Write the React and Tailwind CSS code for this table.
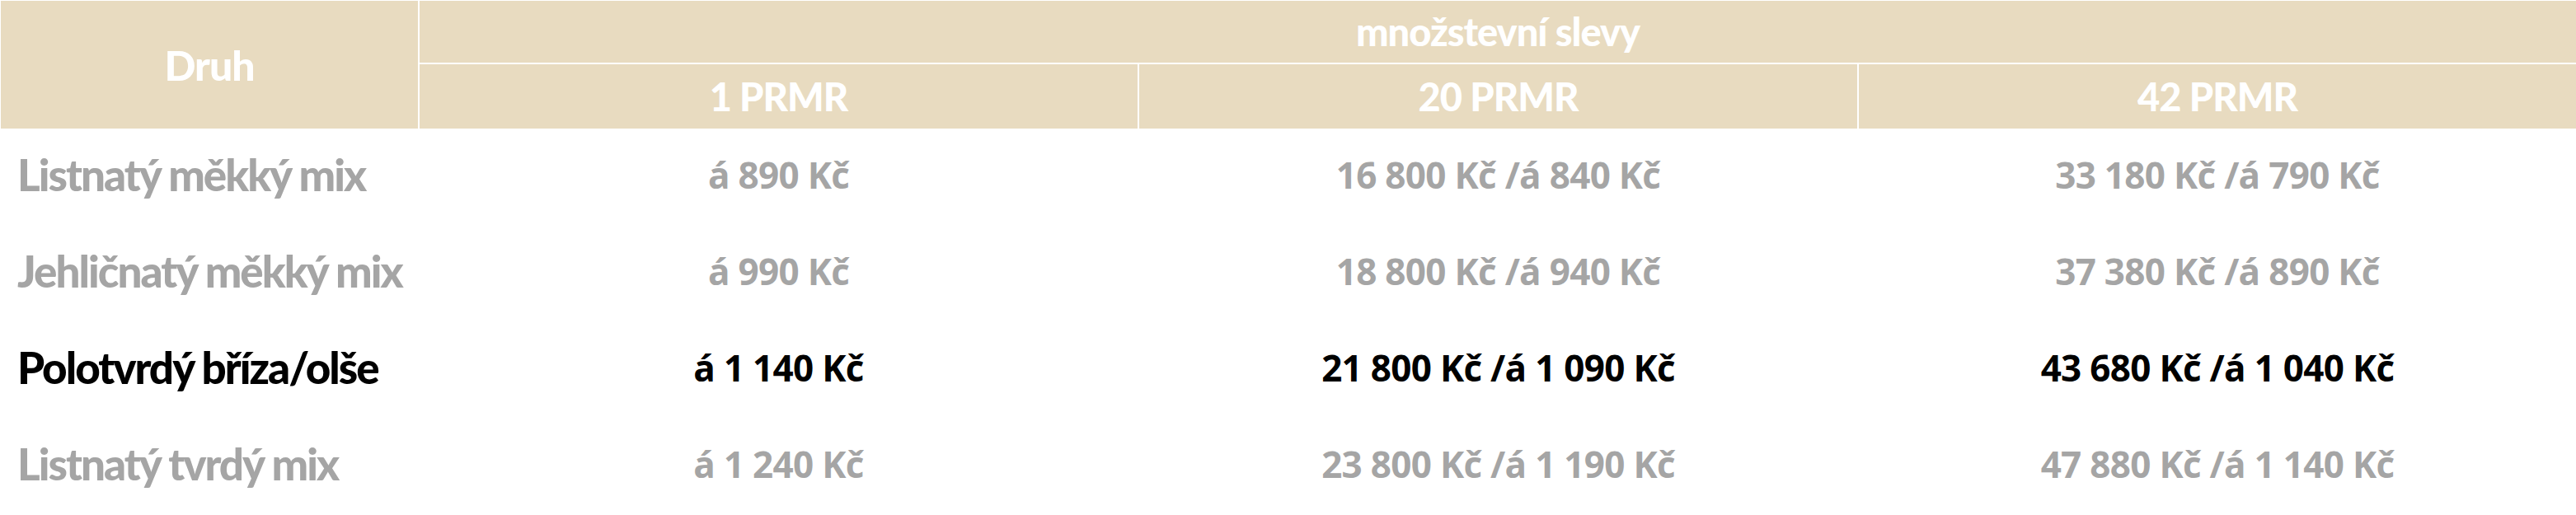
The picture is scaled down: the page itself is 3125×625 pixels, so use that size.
const rows = [
  { name: 'Listnatý měkký mix', p1: 'á 890 Kč', p20: '16 800 Kč /á 840 Kč', p42: '33 180 Kč /á 790 Kč' },
  { name: 'Jehličnatý měkký mix', p1: 'á 990 Kč', p20: '18 800 Kč /á 940 Kč', p42: '37 380 Kč /á 890 Kč' },
  { name: 'Polotvrdý bříza/olše', p1: 'á 1 140 Kč', p20: '21 800 Kč /á 1 090 Kč', p42: '43 680 Kč /á 1 040 Kč', active: true },
  { name: 'Listnatý tvrdý mix', p1: 'á 1 240 Kč', p20: '23 800 Kč /á 1 190 Kč', p42: '47 880 Kč /á 1 140 Kč' },
];

const head = "font-['Lato',sans-serif] font-black text-white leading-none tracking-[-1px]";
const num = "font-['Open_Sans',sans-serif] font-bold text-[44px] leading-none tracking-[-0.7px] whitespace-nowrap";

export default function App() {
  return (
    <div className="w-[3125px] h-[625px] bg-white overflow-hidden">
      {/* header */}
      <div className="grid grid-cols-[506px_871px_871px_870px] grid-rows-[75px_78px] gap-[2px] pl-px pt-px">
        <div className={`row-span-2 bg-[#e8dbc0] flex items-center justify-center text-[50px] ${head}`}>
          Druh
        </div>
        <div className={`col-span-3 bg-[#e8dbc0] flex items-center justify-center text-[47px] ${head}`}>
          množstevní slevy
        </div>
        {['1 PRMR', '20 PRMR', '42 PRMR'].map((t) => (
          <div key={t} className={`bg-[#e8dbc0] flex items-center justify-center text-[47px] ${head}`}>
            {t}
          </div>
        ))}
      </div>

      {/* body */}
      <div className="grid grid-cols-[506px_871px_871px_870px] gap-x-[2px] pl-px pt-[2px]">
        {rows.map((r) => {
          const color = r.active ? 'text-black' : 'text-[#a5a5a5]';
          return [
            <div key={r.name} className={`h-[117px] pb-[10px] flex items-center pl-5 font-['Lato',sans-serif] font-black text-[53px] leading-none tracking-[-2px] whitespace-nowrap ${color}`}>
              {r.name}
            </div>,
            <div key={r.name + '1'} className={`h-[117px] pb-[10px] flex items-center justify-center ${num} ${color}`}>{r.p1}</div>,
            <div key={r.name + '20'} className={`h-[117px] pb-[10px] flex items-center justify-center ${num} ${color}`}>{r.p20}</div>,
            <div key={r.name + '42'} className={`h-[117px] pb-[10px] flex items-center justify-center ${num} ${color}`}>{r.p42}</div>,
          ];
        })}
      </div>
    </div>
  );
}
